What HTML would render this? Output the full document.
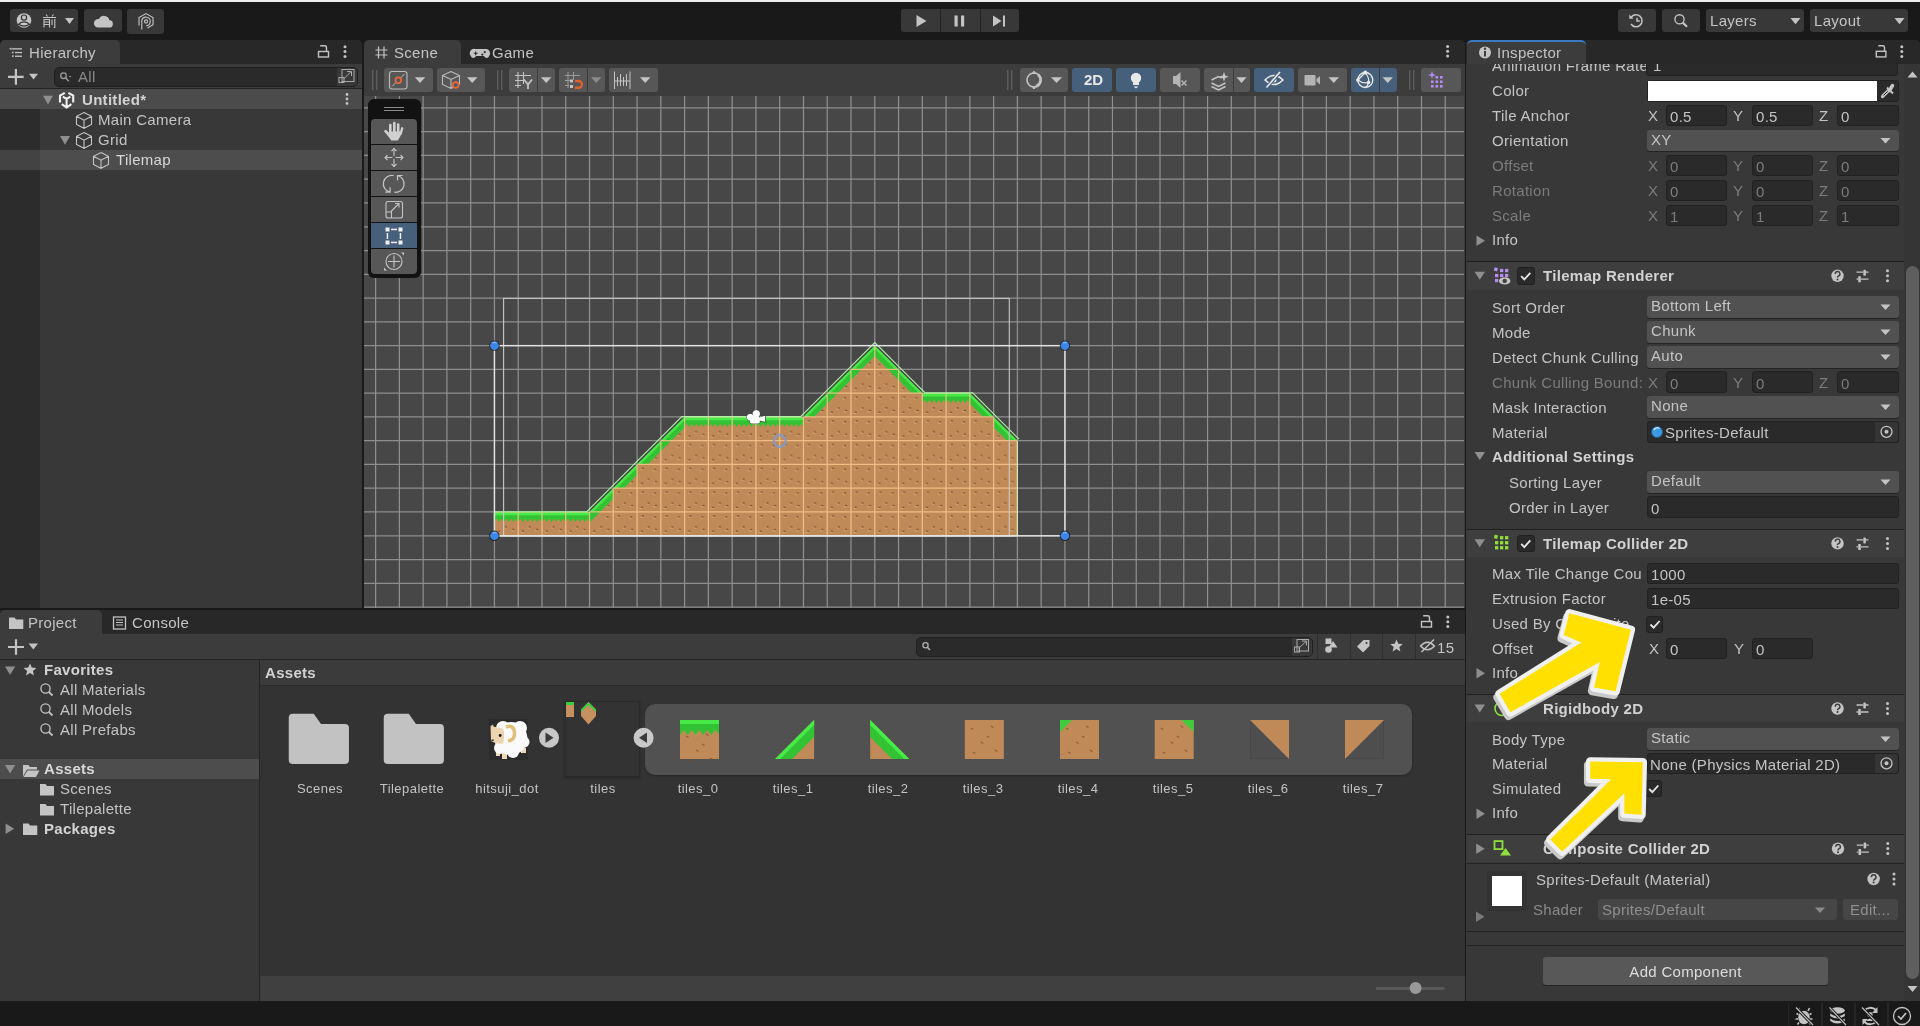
<!DOCTYPE html>
<html><head><meta charset="utf-8"><style>
*{box-sizing:border-box;margin:0;padding:0}
html,body{width:1920px;height:1026px;overflow:hidden}
body{background:#191919;position:relative;font-family:"Liberation Sans",sans-serif;font-size:15px;color:#c4c4c4;letter-spacing:0.3px}
.a{position:absolute}
.t{position:absolute;white-space:nowrap;line-height:20px;height:20px;will-change:transform}
.b{font-weight:bold}
.btn{position:absolute;background:#383838;border-radius:3px}
.tri{position:absolute;width:0;height:0;border-left:5px solid transparent;border-right:5px solid transparent;border-top:6px solid #c4c4c4}
svg{position:absolute;overflow:visible}

</style></head><body>
<div class="a" style="left:0;top:0;width:1920px;height:2px;background:#ededed"></div>
<!-- account -->
<div class="btn" style="left:10px;top:9px;width:68px;height:23px"></div>
<div class="btn" style="left:84px;top:9px;width:38px;height:23px"></div>
<div class="btn" style="left:127px;top:9px;width:37px;height:25px"></div>
<svg style="left:0;top:0" width="1920" height="40">
  <circle cx="24" cy="20.5" r="7.3" fill="#c4c4c4"/>
  <circle cx="24" cy="17.6" r="2.6" fill="#c4c4c4" stroke="#383838" stroke-width="1.2"/>
  <path d="M18.6 24.2 Q24 19.6 29.4 24.2 Q24 28 18.6 24.2Z" fill="#c4c4c4" stroke="#383838" stroke-width="1.2"/>
  <!-- 前 -->
  <g stroke="#c4c4c4" stroke-width="1.1" fill="none">
    <path d="M46 14.5 L47.5 16.5 M53.5 14.5 L52 16.5 M43 17.5 H56"/>
    <path d="M44 27.5 V19.5 H49.5 V27.5 M44 22 H49.5 M44 24.5 H49.5"/>
    <path d="M52 19.5 V25 M54.8 19 V27.5 H53.8"/>
  </g>
  <path d="M65 18 H74 L69.5 24Z" fill="#c4c4c4"/>
  <!-- cloud -->
  <path d="M97.5 27.5 H109 A3.6 3.6 0 0 0 109.5 20.3 A5.6 5.6 0 0 0 99 19 A4.3 4.3 0 0 0 97.5 27.5Z" fill="#c4c4c4"/>
  <!-- hex P -->
  <g fill="none" stroke="#c4c4c4" stroke-width="1.1">
    <path d="M147.5 28 L153 24.8 V17.6 L146 13.6 L139 17.6 V25.6"/>
    <path d="M141.8 29.5 V20.5 A4.3 4.3 0 1 1 146 25.8"/>
    <circle cx="146" cy="21.5" r="1.6"/>
  </g>
</svg>
<!-- play group -->
<div class="btn" style="left:901px;top:9px;width:118px;height:23px"></div>
<div class="a" style="left:940px;top:9px;width:1px;height:23px;background:#232323"></div>
<div class="a" style="left:980px;top:9px;width:1px;height:23px;background:#232323"></div>
<!-- right -->
<div class="btn" style="left:1618px;top:9px;width:38px;height:23px"></div>
<div class="btn" style="left:1662px;top:9px;width:38px;height:23px"></div>
<div class="btn" style="left:1706px;top:9px;width:98px;height:23px"></div>
<div class="btn" style="left:1810px;top:9px;width:98px;height:23px"></div>
<div class="t" style="left:1710px;top:11px">Layers</div>
<div class="t" style="left:1814px;top:11px">Layout</div>
<svg style="left:0;top:0" width="1920" height="40">
  <path d="M916.5 15 V27 L926.5 21Z" fill="#c4c4c4"/>
  <rect x="954.5" y="15.5" width="3.2" height="11" fill="#c4c4c4"/>
  <rect x="961" y="15.5" width="3.2" height="11" fill="#c4c4c4"/>
  <path d="M993 15.5 V26.5 L1001.5 21Z" fill="#c4c4c4"/><rect x="1003" y="15.5" width="2" height="11" fill="#c4c4c4"/>
  <!-- history -->
  <g fill="none" stroke="#c4c4c4" stroke-width="1.5">
    <path d="M1631.2 17.2 A6 6 0 1 1 1631 24"/>
    <path d="M1637 17.8 V21 H1639.8"/>
  </g>
  <path d="M1629.3 14.5 V18.8 H1633.6Z" fill="#c4c4c4"/>
  <!-- search -->
  <circle cx="1679.5" cy="19.3" r="4.6" fill="none" stroke="#c4c4c4" stroke-width="1.4"/>
  <path d="M1682.8 22.6 L1687 26.8" stroke="#c4c4c4" stroke-width="2.2"/>
  <path d="M1790.5 18 H1800.5 L1795.5 24.2Z" fill="#c4c4c4"/>
  <path d="M1894.5 18 H1904.5 L1899.5 24.2Z" fill="#c4c4c4"/>
</svg>

<!-- Hierarchy panel -->
<div class="a" style="left:0;top:40px;width:362px;height:568px;background:#383838;border-radius:5px 5px 0 0;overflow:hidden">
  <div class="a" style="left:0;top:0;width:362px;height:24px;background:#282828"></div>
  <div class="a" style="left:0;top:0;width:120px;height:24px;background:#3c3c3c;border-radius:5px 5px 0 0"></div>
  <div class="a" style="left:0;top:24px;width:362px;height:25px;background:#3c3c3c"></div>
  <div class="a" style="left:0;top:48px;width:362px;height:1px;background:#232323"></div>
  <div class="a" style="left:54px;top:27px;width:304px;height:20px;background:#2a2a2a;border:1px solid #1f1f1f;border-radius:5px"></div>
  <div class="a" style="left:337px;top:28px;width:20px;height:18px;background:#383838;border-radius:0 4px 4px 0"></div>
  <div class="a" style="left:0;top:49px;width:40px;height:519px;background:#2c2c2c"></div>
  <div class="a" style="left:0;top:49px;width:362px;height:20px;background:#4b4b4b"></div>
  <div class="a" style="left:0;top:110px;width:40px;height:20px;background:#434343"></div>
  <div class="a" style="left:40px;top:110px;width:322px;height:20px;background:#4d4d4d"></div>
</div>
<div class="t" style="left:28.5px;top:43px">Hierarchy</div>
<div class="t" style="left:77.5px;top:66.5px;color:#8a8a8a">All</div>
<div class="t b" style="left:81.5px;top:89.8px;color:#d2d2d2">Untitled*</div>
<div class="t" style="left:97.5px;top:110px">Main Camera</div>
<div class="t" style="left:97.5px;top:130px">Grid</div>
<div class="t" style="left:115.8px;top:150px;color:#d8d8d8">Tilemap</div>
<svg style="left:0;top:40px" width="362" height="140">
  <!-- list icon -->
  <g fill="#c4c4c4">
    <path d="M9 8.8 L11.5 7.5 V10.1Z"/>
    <rect x="12" y="8.2" width="10" height="1.3"/>
    <rect x="12" y="11.7" width="1.6" height="1.6"/><rect x="15" y="11.9" width="7" height="1.3"/>
    <rect x="12" y="15.3" width="1.6" height="1.6"/><rect x="15" y="15.6" width="7" height="1.3"/>
  </g>
  <!-- lock -->
  <g fill="none" stroke="#c4c4c4" stroke-width="1.4">
    <rect x="318.5" y="11.5" width="10" height="5.5"/>
    <path d="M326.5 11.5V7.5Q326.5 5.8 324.7 5.8H320.2"/>
  </g>
  <g fill="#c4c4c4"><circle cx="345" cy="6.8" r="1.5"/><circle cx="345" cy="11.6" r="1.5"/><circle cx="345" cy="16.4" r="1.5"/></g>
  <!-- plus -->
  <path d="M8 36.9 H23.7 M15.9 29 V44.7" stroke="#c4c4c4" stroke-width="2.2"/>
  <path d="M29 33.7 H38 L33.5 39.4Z" fill="#c4c4c4"/>
  <!-- search icon -->
  <circle cx="63.5" cy="35.7" r="2.8" fill="none" stroke="#9a9a9a" stroke-width="1.3"/>
  <path d="M65.5 37.8 L68.8 41.2" stroke="#9a9a9a" stroke-width="1.5"/>
  <path d="M68.7 36 H71.3 L70 37.6Z" fill="#9a9a9a"/>
  <!-- expand icon -->
  <g fill="none" stroke="#aaaaaa" stroke-width="1">
    <rect x="342" y="29.5" width="12" height="12"/>
    <rect x="339" y="37.5" width="5" height="5"/>
    <path d="M343.5 39 L351 31.8 M347 31.5 H351.5 V36"/>
  </g>
  <!-- untitled row -->
  <path d="M43 55.8 H53 L48 64.4Z" fill="#8f8f8f"/>
  <g fill="none" stroke="#f0f0f0" stroke-width="2.1"><path d="M60 62.5V55.5L64.8 52.8M68.4 52.8L73.2 55.5V62.5M61.8 64.2L66.6 67.5L71.4 64.2M62.8 56.6L66.6 58.9L70.4 56.6M66.6 58.9V67.5"/></g>
  <g fill="#c4c4c4"><circle cx="347" cy="54.5" r="1.4"/><circle cx="347" cy="59" r="1.4"/><circle cx="347" cy="63.5" r="1.4"/></g>
  <!-- cubes -->
  <g fill="none" stroke="#c4c4c4" stroke-width="1.1">
    <path id="cube" d="M84 72.5 L91.5 76.3 V84.5 L84 88.3 L76.5 84.5 V76.3Z M76.5 76.3 L84 80.2 L91.5 76.3 M84 80.2 V88.3"/>
    <path d="M84 92.5 L91.5 96.3 V104.5 L84 108.3 L76.5 104.5 V96.3Z M76.5 96.3 L84 100.2 L91.5 96.3 M84 100.2 V108.3"/>
    <path d="M101 112.5 L108.5 116.3 V124.5 L101 128.3 L93.5 124.5 V116.3Z M93.5 116.3 L101 120.2 L108.5 116.3 M101 120.2 V128.3"/>
  </g>
  <path d="M60 96 H70 L65 104.8Z" fill="#8f8f8f"/>
</svg>

<!-- Scene panel -->
<div class="a" style="left:364px;top:40px;width:1101px;height:568px;background:#3c3c3c;border-radius:5px 5px 0 0;overflow:hidden">
  <div class="a" style="left:0;top:0;width:1101px;height:24px;background:#282828"></div>
  <div class="a" style="left:0;top:0;width:97px;height:24px;background:#3c3c3c;border-radius:5px 5px 0 0"></div>
</div>
<svg style="left:0;top:0" width="1920" height="1026" viewBox="0 0 1920 1026">
<defs><clipPath id="sc"><rect x="364" y="96" width="1100" height="512"/></clipPath>
<pattern id="dirt" patternUnits="userSpaceOnUse" x="494.45" y="535.80" width="23.77" height="23.77">
<rect width="24" height="24" fill="#c08a58"/>
<ellipse cx="5.0" cy="4.8999999999999995" rx="1.5" ry="0.85" fill="#dcb486" opacity="0.75"/>
<ellipse cx="5.7" cy="3.9999999999999996" rx="1.4" ry="0.75" fill="#6a4020" opacity="0.8"/>
<ellipse cx="17.1" cy="5.8999999999999995" rx="1.5" ry="0.85" fill="#dcb486" opacity="0.75"/>
<ellipse cx="17.8" cy="5.0" rx="1.4" ry="0.75" fill="#6a4020" opacity="0.8"/>
<ellipse cx="10.799999999999999" cy="15.700000000000001" rx="1.5" ry="0.85" fill="#dcb486" opacity="0.75"/>
<ellipse cx="11.5" cy="14.8" rx="1.4" ry="0.75" fill="#6a4020" opacity="0.8"/>
<ellipse cx="4.0" cy="20.0" rx="1.5" ry="0.85" fill="#dcb486" opacity="0.75"/>
<ellipse cx="4.7" cy="19.099999999999998" rx="1.4" ry="0.75" fill="#6a4020" opacity="0.8"/>
<ellipse cx="18.1" cy="18.3" rx="1.5" ry="0.85" fill="#dcb486" opacity="0.75"/>
<ellipse cx="18.8" cy="17.4" rx="1.4" ry="0.75" fill="#6a4020" opacity="0.8"/>
</pattern></defs>
<g clip-path="url(#sc)">
<rect x="364" y="96" width="1100" height="512" fill="#474747"/>
<path d="M375.60 96V608M399.37 96V608M423.14 96V608M446.91 96V608M470.68 96V608M494.45 96V608M518.22 96V608M541.99 96V608M565.76 96V608M589.53 96V608M613.30 96V608M637.07 96V608M660.84 96V608M684.61 96V608M708.38 96V608M732.15 96V608M755.92 96V608M779.69 96V608M803.46 96V608M827.23 96V608M851.00 96V608M874.77 96V608M898.54 96V608M922.31 96V608M946.08 96V608M969.85 96V608M993.62 96V608M1017.39 96V608M1041.16 96V608M1064.93 96V608M1088.70 96V608M1112.47 96V608M1136.24 96V608M1160.01 96V608M1183.78 96V608M1207.55 96V608M1231.32 96V608M1255.09 96V608M1278.86 96V608M1302.63 96V608M1326.40 96V608M1350.17 96V608M1373.94 96V608M1397.71 96V608M1421.48 96V608M1445.25 96V608M364 107.90H1464M364 131.67H1464M364 155.44H1464M364 179.21H1464M364 202.98H1464M364 226.75H1464M364 250.52H1464M364 274.29H1464M364 298.06H1464M364 321.83H1464M364 345.60H1464M364 369.37H1464M364 393.14H1464M364 416.91H1464M364 440.68H1464M364 464.45H1464M364 488.22H1464M364 511.99H1464M364 535.76H1464M364 559.53H1464M364 583.30H1464M364 607.07H1464" stroke="#8e8e8e" stroke-width="1.25" fill="none"/>
<path d="M494.45 535.80H518.22V512.03H494.45ZM518.22 535.80H541.99V512.03H518.22ZM541.99 535.80H565.76V512.03H541.99ZM565.76 535.80H589.53V512.03H565.76ZM589.53 535.80H613.30V512.03H589.53ZM589.53 512.03L613.30 488.26V512.03ZM613.30 535.80H637.07V488.26H613.30ZM613.30 488.26L637.07 464.49V488.26ZM637.07 535.80H660.84V464.49H637.07ZM637.07 464.49L660.84 440.72V464.49ZM660.84 535.80H684.61V440.72H660.84ZM660.84 440.72L684.61 416.95V440.72ZM684.61 535.80H708.38V416.95H684.61ZM708.38 535.80H732.15V416.95H708.38ZM732.15 535.80H755.92V416.95H732.15ZM755.92 535.80H779.69V416.95H755.92ZM779.69 535.80H803.46V416.95H779.69ZM803.46 535.80H827.23V416.95H803.46ZM803.46 416.95L827.23 393.18V416.95ZM827.23 535.80H851.00V393.18H827.23ZM827.23 393.18L851.00 369.41V393.18ZM851.00 535.80H874.77V369.41H851.00ZM851.00 369.41L874.77 345.64V369.41ZM874.77 535.80H898.54V369.41H874.77ZM874.77 345.64L898.54 369.41H874.77ZM898.54 535.80H922.31V393.18H898.54ZM898.54 369.41L922.31 393.18H898.54ZM922.31 535.80H946.08V393.18H922.31ZM946.08 535.80H969.85V393.18H946.08ZM969.85 535.80H993.62V416.95H969.85ZM969.85 393.18L993.62 416.95H969.85ZM993.62 535.80H1017.39V440.72H993.62ZM993.62 416.95L1017.39 440.72H993.62Z" fill="url(#dirt)"/>
<path d="M494.45 512.03H518.22V522.03L515.84 518.83L513.47 522.03L511.09 518.83L508.71 522.03L506.34 518.83L503.96 522.03L501.58 518.83L499.20 522.03L496.83 518.83L494.45 522.03ZM518.22 512.03H541.99V522.03L539.61 518.83L537.24 522.03L534.86 518.83L532.48 522.03L530.11 518.83L527.73 522.03L525.35 518.83L522.97 522.03L520.60 518.83L518.22 522.03ZM541.99 512.03H565.76V522.03L563.38 518.83L561.01 522.03L558.63 518.83L556.25 522.03L553.88 518.83L551.50 522.03L549.12 518.83L546.74 522.03L544.37 518.83L541.99 522.03ZM565.76 512.03H589.53V522.03L587.15 518.83L584.78 522.03L582.40 518.83L580.02 522.03L577.64 518.83L575.27 522.03L572.89 518.83L570.51 522.03L568.14 518.83L565.76 522.03ZM589.53 512.03L613.30 488.26V498.76L600.03 512.03ZM613.30 488.26L637.07 464.49V474.99L623.80 488.26ZM637.07 464.49L660.84 440.72V451.22L647.57 464.49ZM660.84 440.72L684.61 416.95V427.45L671.34 440.72ZM684.61 416.95H708.38V426.95L706.00 423.75L703.63 426.95L701.25 423.75L698.87 426.95L696.50 423.75L694.12 426.95L691.74 423.75L689.36 426.95L686.99 423.75L684.61 426.95ZM708.38 416.95H732.15V426.95L729.77 423.75L727.40 426.95L725.02 423.75L722.64 426.95L720.26 423.75L717.89 426.95L715.51 423.75L713.13 426.95L710.76 423.75L708.38 426.95ZM732.15 416.95H755.92V426.95L753.54 423.75L751.17 426.95L748.79 423.75L746.41 426.95L744.03 423.75L741.66 426.95L739.28 423.75L736.90 426.95L734.53 423.75L732.15 426.95ZM755.92 416.95H779.69V426.95L777.31 423.75L774.94 426.95L772.56 423.75L770.18 426.95L767.80 423.75L765.43 426.95L763.05 423.75L760.67 426.95L758.30 423.75L755.92 426.95ZM779.69 416.95H803.46V426.95L801.08 423.75L798.71 426.95L796.33 423.75L793.95 426.95L791.58 423.75L789.20 426.95L786.82 423.75L784.44 426.95L782.07 423.75L779.69 426.95ZM803.46 416.95L827.23 393.18V403.68L813.96 416.95ZM827.23 393.18L851.00 369.41V379.91L837.73 393.18ZM851.00 369.41L874.77 345.64V356.14L861.50 369.41ZM874.77 345.64L898.54 369.41H888.04L874.77 356.14ZM898.54 369.41L922.31 393.18H911.81L898.54 379.91ZM922.31 393.18H946.08V403.18L943.70 399.98L941.33 403.18L938.95 399.98L936.57 403.18L934.19 399.98L931.82 403.18L929.44 399.98L927.06 403.18L924.69 399.98L922.31 403.18ZM946.08 393.18H969.85V403.18L967.47 399.98L965.10 403.18L962.72 399.98L960.34 403.18L957.96 399.98L955.59 403.18L953.21 399.98L950.83 403.18L948.46 399.98L946.08 403.18ZM969.85 393.18L993.62 416.95H983.12L969.85 403.68ZM993.62 416.95L1017.39 440.72H1006.89L993.62 427.45ZM589.53 512.03H600.03L589.53 522.53ZM660.84 440.72H671.34L660.84 451.22ZM827.23 393.18H837.73L827.23 403.68ZM851.00 369.41H861.50L851.00 379.91ZM898.54 369.41H888.04L898.54 379.91Z" fill="#33c233"/>
<path d="M494.45 512.03H518.22V515.23H494.45ZM518.22 512.03H541.99V515.23H518.22ZM541.99 512.03H565.76V515.23H541.99ZM565.76 512.03H589.53V515.23H565.76ZM589.53 512.03L613.30 488.26V491.46L592.73 512.03ZM613.30 488.26L637.07 464.49V467.69L616.50 488.26ZM637.07 464.49L660.84 440.72V443.92L640.27 464.49ZM660.84 440.72L684.61 416.95V420.15L664.04 440.72ZM684.61 416.95H708.38V420.15H684.61ZM708.38 416.95H732.15V420.15H708.38ZM732.15 416.95H755.92V420.15H732.15ZM755.92 416.95H779.69V420.15H755.92ZM779.69 416.95H803.46V420.15H779.69ZM803.46 416.95L827.23 393.18V396.38L806.66 416.95ZM827.23 393.18L851.00 369.41V372.61L830.43 393.18ZM851.00 369.41L874.77 345.64V348.84L854.20 369.41ZM874.77 345.64L898.54 369.41H895.34L874.77 348.84ZM898.54 369.41L922.31 393.18H919.11L898.54 372.61ZM922.31 393.18H946.08V396.38H922.31ZM946.08 393.18H969.85V396.38H946.08ZM969.85 393.18L993.62 416.95H990.42L969.85 396.38ZM993.62 416.95L1017.39 440.72H1014.19L993.62 420.15Z" fill="#47ea47"/>
<clipPath id="tm"><polygon points="494.45,535.80 494.45,512.03 518.22,512.03 541.99,512.03 565.76,512.03 589.53,512.03 613.30,488.26 637.07,464.49 660.84,440.72 684.61,416.95 708.38,416.95 732.15,416.95 755.92,416.95 779.69,416.95 803.46,416.95 827.23,393.18 851.00,369.41 874.77,345.64 898.54,369.41 922.31,393.18 946.08,393.18 969.85,393.18 993.62,416.95 1017.39,440.72 1017.39,535.80"/></clipPath>
<g clip-path="url(#tm)"><path d="M375.60 96V608M399.37 96V608M423.14 96V608M446.91 96V608M470.68 96V608M494.45 96V608M518.22 96V608M541.99 96V608M565.76 96V608M589.53 96V608M613.30 96V608M637.07 96V608M660.84 96V608M684.61 96V608M708.38 96V608M732.15 96V608M755.92 96V608M779.69 96V608M803.46 96V608M827.23 96V608M851.00 96V608M874.77 96V608M898.54 96V608M922.31 96V608M946.08 96V608M969.85 96V608M993.62 96V608M1017.39 96V608M1041.16 96V608M1064.93 96V608M1088.70 96V608M1112.47 96V608M1136.24 96V608M1160.01 96V608M1183.78 96V608M1207.55 96V608M1231.32 96V608M1255.09 96V608M1278.86 96V608M1302.63 96V608M1326.40 96V608M1350.17 96V608M1373.94 96V608M1397.71 96V608M1421.48 96V608M1445.25 96V608M364 107.90H1464M364 131.67H1464M364 155.44H1464M364 179.21H1464M364 202.98H1464M364 226.75H1464M364 250.52H1464M364 274.29H1464M364 298.06H1464M364 321.83H1464M364 345.60H1464M364 369.37H1464M364 393.14H1464M364 416.91H1464M364 440.68H1464M364 464.45H1464M364 488.22H1464M364 511.99H1464M364 535.76H1464M364 559.53H1464M364 583.30H1464M364 607.07H1464" stroke="#f3c38c" stroke-width="1.25" fill="none" opacity="0.9"/></g>
<polyline points="494.45,511.73 518.22,511.73 541.99,511.73 565.76,511.73 586.72,511.73 611.74,486.70 635.51,462.93 659.28,439.16 681.80,416.65 708.38,416.65 732.15,416.65 755.92,416.65 779.69,416.65 800.65,416.65 825.67,391.62 849.44,367.85 874.77,342.53 900.10,367.85 925.12,392.88 946.08,392.88 972.66,392.88 995.18,415.39 1018.95,439.16" fill="none" stroke="#aef2a6" stroke-width="1.1"/>
<polyline points="494.45,512.03 494.45,535.80" stroke="#c8f8c0" stroke-width="1"/>
<polyline points="1017.39,440.72 1017.39,535.80" stroke="#c8f8c0" stroke-width="1"/>
<polyline points="494.45,535.80 1017.39,535.80" stroke="#d8ffd0" stroke-width="1.5"/>
<rect x="503.6" y="298.4" width="505.7" height="237.6" fill="none" stroke="#c8c8c8" stroke-width="1.1"/>
<rect x="494.45" y="345.64" width="570.48" height="190.16" fill="none" stroke="#e4e4e4" stroke-width="1.4"/>
<circle cx="494.45" cy="345.64" r="5.2" fill="#141414" opacity="0.8"/>
<circle cx="494.45" cy="345.64" r="4.3" fill="#3d86e8"/>
<path d="M492.45 342.64h4" stroke="#8ec0ff" stroke-width="1"/>
<circle cx="1064.93" cy="345.64" r="5.2" fill="#141414" opacity="0.8"/>
<circle cx="1064.93" cy="345.64" r="4.3" fill="#3d86e8"/>
<path d="M1062.93 342.64h4" stroke="#8ec0ff" stroke-width="1"/>
<circle cx="494.45" cy="535.80" r="5.2" fill="#141414" opacity="0.8"/>
<circle cx="494.45" cy="535.80" r="4.3" fill="#3d86e8"/>
<path d="M492.45 532.80h4" stroke="#8ec0ff" stroke-width="1"/>
<circle cx="1064.93" cy="535.80" r="5.2" fill="#141414" opacity="0.8"/>
<circle cx="1064.93" cy="535.80" r="4.3" fill="#3d86e8"/>
<path d="M1062.93 532.80h4" stroke="#8ec0ff" stroke-width="1"/>
<circle cx="779.8" cy="441" r="5.9" fill="none" stroke="#7f9ac8" stroke-width="2.6" opacity="0.8"/>
<g fill="#ffffff" stroke="#1a1a1a" stroke-width="0.6"><circle cx="756.3" cy="413.8" r="3.8"/><circle cx="750.3" cy="417.3" r="3.6"/><rect x="749.5" y="416" width="10.5" height="7.5" rx="2"/><path d="M759 417.5 L765.5 415.2 V422.2 L759 420.5Z"/></g>
<g fill="#ffffff"><circle cx="756.3" cy="413.8" r="3.5"/><circle cx="750.3" cy="417.3" r="3.3"/><rect x="750" y="416.4" width="9.8" height="7" rx="2"/><path d="M759.3 417.9 L765 415.9 V421.6 L759.3 420.2Z"/></g>
</g></svg>

<div class="t" style="left:394.3px;top:43px">Scene</div>
<div class="t" style="left:492.3px;top:43px">Game</div>
<!-- scene toolbar buttons -->
<div class="a" style="left:384px;top:68px;width:49px;height:24px;background:#575757;border-radius:3px"></div>
<div class="a" style="left:437px;top:68px;width:48px;height:24px;background:#575757;border-radius:3px"></div>
<div class="a" style="left:509px;top:68px;width:46px;height:24px;background:#575757;border-radius:3px"></div>
<div class="a" style="left:537px;top:68px;width:1px;height:24px;background:#3c3c3c"></div>
<div class="a" style="left:559px;top:68px;width:46px;height:24px;background:#575757;border-radius:3px"></div>
<div class="a" style="left:587px;top:68px;width:1px;height:24px;background:#3c3c3c"></div>
<div class="a" style="left:609px;top:68px;width:49px;height:24px;background:#575757;border-radius:3px"></div>
<div class="a" style="left:1020px;top:68px;width:48px;height:24px;background:#575757;border-radius:3px"></div>
<div class="a" style="left:1072px;top:68px;width:40px;height:24px;background:#46607c;border-radius:3px"></div>
<div class="a" style="left:1116px;top:68px;width:40px;height:24px;background:#46607c;border-radius:3px"></div>
<div class="a" style="left:1160px;top:68px;width:40px;height:24px;background:#575757;border-radius:3px"></div>
<div class="a" style="left:1204px;top:68px;width:46px;height:24px;background:#575757;border-radius:3px"></div>
<div class="a" style="left:1233px;top:68px;width:1px;height:24px;background:#3c3c3c"></div>
<div class="a" style="left:1254px;top:68px;width:40px;height:24px;background:#46607c;border-radius:3px"></div>
<div class="a" style="left:1298px;top:68px;width:49px;height:24px;background:#575757;border-radius:3px"></div>
<div class="a" style="left:1351px;top:68px;width:46px;height:24px;background:#46607c;border-radius:3px"></div>
<div class="a" style="left:1379px;top:68px;width:1px;height:24px;background:#3c3c3c"></div>
<div class="a" style="left:1421px;top:68px;width:40px;height:24px;background:#575757;border-radius:3px"></div>
<div class="t b" style="left:1084px;top:70px;color:#e8e8e8;font-size:15px;letter-spacing:0">2D</div>
<svg style="left:0;top:0" width="1920" height="100">
  <!-- scene tab icon # -->
  <path d="M378.5 46.5V58.5M384 46.5V58.5M375.5 50H387.5M375.5 55H387.5" stroke="#c4c4c4" stroke-width="1.2"/>
  <!-- game icon -->
  <path d="M475 49H485.5A4.3 4.3 0 0 1 489 56.2Q488.3 58.6 485.8 57.8L483.6 56H476.4L474.2 57.8Q471.7 58.6 471 56.2A4.3 4.3 0 0 1 475 49Z" fill="#c4c4c4"/>
  <path d="M473.8 53.3H477.6M475.7 51.4V55.2" stroke="#282828" stroke-width="1.1"/>
  <circle cx="482.3" cy="54.6" r="1.1" fill="#282828"/><circle cx="484.8" cy="52.1" r="1.1" fill="#282828"/>
  <!-- kebab -->
  <g fill="#c4c4c4"><circle cx="1447.6" cy="46.5" r="1.5"/><circle cx="1447.6" cy="51.3" r="1.5"/><circle cx="1447.6" cy="56.1" r="1.5"/></g>
  <!-- grips -->
  <path d="M372.8 70V90M376.8 70V90M497.8 70V90M501.8 70V90M1007.8 70V90M1011.8 70V90M1409.8 70V90M1413.8 70V90" stroke="#6a6a6a" stroke-width="1"/>
  <!-- B1 -->
  <rect x="389.5" y="71.5" width="17.5" height="17.5" rx="2.5" fill="none" stroke="#bdbdbd" stroke-width="1.1"/>
  <path d="M392 86.5L396 82.5M400.5 78L404.5 74" stroke="#bdbdbd" stroke-width="1"/>
  <circle cx="398.3" cy="80.3" r="2.9" fill="none" stroke="#f0683a" stroke-width="1.6"/>
  <g fill="#c4c4c4">
    <path d="M414.8 77.2H425.3L420 83.1Z"/>
    <path d="M467 77.2H477.5L472.2 83.1Z"/>
    <path d="M541 77.2H551.5L546.2 83.1Z"/>
    <path d="M640 77.2H650.5L645.2 83.1Z"/>
    <path d="M1051 77.2H1062L1056.5 83.1Z"/>
    <path d="M1236.5 77.2H1246.5L1241.5 83.1Z"/>
    <path d="M1328.5 77.2H1339L1333.7 83.1Z"/>
    <path d="M1382.5 77.2H1393L1387.7 83.1Z"/>
  </g>
  <path d="M591 77.2H601.5L596.2 83.1Z" fill="#8a8a8a"/>
  <!-- B2 cube -->
  <g fill="none" stroke="#bdbdbd" stroke-width="1.1">
    <path d="M451 71.5L459.5 75.5V84.5M451 71.5L442.5 75.5V84.5L451 88.5L453 87.5M442.5 75.5L451 79.5L459.5 75.5M451 79.5V88.5"/>
  </g>
  <circle cx="455.7" cy="85" r="2.9" fill="#575757" stroke="#f0683a" stroke-width="1.6"/>
  <!-- B3 grid Y -->
  <g stroke="#c4c4c4" stroke-width="1.1" fill="none">
    <path d="M518 72V88M523.5 72V84M515 75.5H531M515 80.5H525M515 85.5H521"/>
  </g>
  <path d="M524 79.5L528 84.5L532 79.5M528 84.5V89" stroke="#c4c4c4" stroke-width="1.8" fill="none"/>
  <!-- B4 grid magnet -->
  <g stroke="#9a9a9a" stroke-width="1" fill="none">
    <path d="M568 72V88M573.5 72V80M565 75.5H580M565 80.5H572M565 85.5H569"/>
  </g>
  <rect x="570" y="79.5" width="3" height="3" fill="#c4c4c4"/><rect x="570" y="85" width="3" height="3" fill="#c4c4c4"/>
  <path d="M575 81H578.5A3.4 3.4 0 0 1 578.5 87.8H575" stroke="#e0602e" stroke-width="2.4" fill="none"/>
  <!-- B5 ruler -->
  <path d="M614.5 71.5V89M630 71.5V89M617.5 77V86M620.5 74V86M623.5 77V86M626.5 74V86M614.5 81H630" stroke="#c4c4c4" stroke-width="1" fill="none"/>
  <!-- shading circle -->
  <circle cx="1034" cy="80" r="7" fill="none" stroke="#c4c4c4" stroke-width="1.6"/>
  <path d="M1038 74.5A7 7 0 0 1 1036 86.5" stroke="#c4c4c4" stroke-width="2.6" fill="none"/>
  <circle cx="1034" cy="72.5" r="1.5" fill="#c4c4c4"/><circle cx="1034" cy="87.5" r="1.5" fill="#c4c4c4"/>
  <!-- light bulb -->
  <circle cx="1136" cy="78" r="5.2" fill="#e8e8e8"/>
  <path d="M1133 82H1139V85H1133Z" fill="#e8e8e8"/>
  <path d="M1133.5 86.5H1138.5L1136 88.5Z" fill="#e8e8e8"/>
  <!-- audio mute -->
  <path d="M1173 76H1176L1180.5 72V88L1176 84H1173Z" fill="#b4b4b4"/>
  <path d="M1181.5 80.5L1186.5 85.5M1186.5 80.5L1181.5 85.5" stroke="#b4b4b4" stroke-width="1.5"/>
  <!-- effects -->
  <path d="M1211.5 83L1218.5 86.5L1225.5 83M1211.5 86.5L1218.5 90L1225.5 86.5" stroke="#c4c4c4" stroke-width="1.5" fill="none"/>
  <path d="M1211.5 80L1218.5 76.5L1222 78.2" stroke="#c4c4c4" stroke-width="1.5" fill="none"/>
  <path d="M1224 72L1225.3 75.5L1228.8 76.8L1225.3 78.1L1224 81.6L1222.7 78.1L1219.2 76.8L1222.7 75.5Z" fill="#c4c4c4"/>
  <!-- hidden eye -->
  <path d="M1265 80Q1274 71 1283 80Q1274 89 1265 80Z" fill="none" stroke="#e8e8e8" stroke-width="1.6"/>
  <circle cx="1274" cy="80" r="2.5" fill="#e8e8e8"/>
  <path d="M1266.5 87.5L1280 72" stroke="#46607c" stroke-width="3.5"/>
  <path d="M1266.5 87.5L1280 72" stroke="#e8e8e8" stroke-width="1.6"/>
  <!-- camera -->
  <rect x="1304.5" y="75" width="11" height="10.5" rx="1" fill="#b4b4b4"/>
  <path d="M1316.5 79L1320 76V84.5L1316.5 81.5Z" fill="#b4b4b4"/>
  <!-- gizmos globe -->
  <circle cx="1365.3" cy="80" r="7.5" fill="none" stroke="#e8e8e8" stroke-width="1.4"/>
  <path d="M1357.8 80Q1362 76 1365.3 72.5Q1370 79 1368.5 82.5Q1363 84 1357.8 80M1368.5 82.5Q1368 86 1365.3 87.5" fill="none" stroke="#e8e8e8" stroke-width="1.2"/>
  <circle cx="1365.3" cy="72.5" r="2" fill="#e8e8e8"/><circle cx="1357.8" cy="80" r="1.8" fill="#e8e8e8"/><circle cx="1368.5" cy="82.5" r="1.8" fill="#e8e8e8"/>
  <!-- tile palette -->
  <g fill="#b48ef0">
    <rect x="1435.5" y="76" width="2.6" height="2.6"/><rect x="1440" y="76" width="2.6" height="2.6"/>
    <rect x="1431" y="80.5" width="2.6" height="2.6"/><rect x="1435.5" y="80.5" width="2.6" height="2.6"/><rect x="1440" y="80.5" width="2.6" height="2.6"/>
    <rect x="1431" y="85" width="2.6" height="2.6"/><rect x="1435.5" y="85" width="2.6" height="2.6"/><rect x="1440" y="85" width="2.6" height="2.6"/>
    <path d="M1432 71L1433 74L1436 75L1433 76L1432 79L1431 76L1428 75L1431 74Z"/>
  </g>
</svg>
<!-- tool overlay -->
<div class="a" style="left:367.5px;top:99px;width:53.5px;height:178.5px;background:#121212;border-radius:6px"></div>
<div class="a" style="left:371px;top:119px;width:46px;height:24.5px;background:#575757;border-radius:4px 4px 0 0"></div>
<div class="a" style="left:371px;top:145px;width:46px;height:25px;background:#575757"></div>
<div class="a" style="left:371px;top:171px;width:46px;height:25px;background:#575757"></div>
<div class="a" style="left:371px;top:197px;width:46px;height:25px;background:#575757"></div>
<div class="a" style="left:371px;top:223px;width:46px;height:25px;background:#46607c"></div>
<div class="a" style="left:371px;top:249px;width:46px;height:25px;background:#575757;border-radius:0 0 4px 4px"></div>
<svg style="left:0;top:0" width="1920" height="300">
  <path d="M384 107.5H404M384 110.5H404" stroke="#8a8a8a" stroke-width="1"/>
  <!-- hand -->
  <g stroke="#d0d0d0" stroke-linecap="round" fill="none">
    <path d="M390.3 125V133M394.3 123V133M398.2 124.5V133" stroke-width="2.6"/>
    <path d="M402.2 128.3L400.6 134" stroke-width="2.4"/>
    <path d="M385.5 131.2L389.5 135.5" stroke-width="2.6"/>
  </g>
  <path d="M389 131.5H401.5L400.5 136L397.8 140.5H391.2L387.8 135.5Z" fill="#d0d0d0"/>
  <!-- move -->
  <g stroke="#c4c4c4" stroke-width="1.1" fill="none">
    <path d="M394 148.5V166.5M385 157.5H403"/>
    <path d="M391.5 151L394 148.5L396.5 151M391.5 164L394 166.5L396.5 164M387.5 155L385 157.5L387.5 160M400.5 155L403 157.5L400.5 160"/>
  </g>
  <rect x="392.5" y="156" width="3" height="3" fill="#575757"/>
  <!-- rotate -->
  <g stroke="#c4c4c4" stroke-width="1.2" fill="none">
    <path d="M393.6 175.5A8.5 8.5 0 0 0 390.1 192.2M390.1 187.2V192.2H385.2"/>
    <path d="M394.4 192.2A8.5 8.5 0 0 0 397.5 175.5M397.5 180.4V175.5H402.6"/>
  </g>
  <!-- scale -->
  <g stroke="#c4c4c4" stroke-width="1.1" fill="none">
    <rect x="386" y="201.5" width="16.5" height="16.5" rx="2"/>
    <path d="M386 212H391.5V218M391 211.5L399 203.5M395 203.5H399V207.5"/>
  </g>
  <!-- rect tool -->
  <g fill="#f0f0f0">
    <rect x="385.5" y="227.5" width="4" height="4"/><rect x="398.5" y="227.5" width="4" height="4"/>
    <rect x="385.5" y="240.5" width="4" height="4"/><rect x="398.5" y="240.5" width="4" height="4"/>
    <rect x="391" y="228.7" width="6" height="1.5"/><rect x="391" y="241.7" width="6" height="1.5"/>
    <rect x="386.7" y="233" width="1.5" height="6"/><rect x="399.7" y="233" width="1.5" height="6"/>
  </g>
  <!-- transform -->
  <g stroke="#c4c4c4" stroke-width="1.1" fill="none">
    <circle cx="394" cy="261.5" r="8"/>
    <path d="M394 255.5V267.5M388 261.5H400"/>
  </g>
  <path d="M401 252.5H404V255.5ZM387 270.5H384V267.5Z" fill="#c4c4c4"/>
</svg>

<div class="a" style="left:1466px;top:40px;width:454px;height:961px;background:#383838;border-radius:5px 5px 0 0;overflow:hidden">
<div class="a" style="left:0;top:0;width:454px;height:24px;background:#282828"></div>
<div class="a" style="left:1px;top:0;width:119px;height:24px;background:#3c3c3c;border-radius:5px 5px 0 0;border-top:2px solid #3a79c0"></div>
<div class="a" style="left:438px;top:24px;width:16px;height:937px;background:#353535"></div>
</div>
<div class="a" style="left:1466px;top:64px;width:438px;height:14px;overflow:hidden">
<div class="a" style="left:25.5px;top:-8.5px;width:154px;height:20px;overflow:hidden"><div class="t" style="left:0;top:0">Animation Frame Rate</div></div>
<div class="a" style="left:180px;top:-10px;width:252px;height:21.5px;background:#2a2a2a;border:1px solid #212121;border-radius:3px"></div>
<div class="t" style="left:187px;top:-8.5px">1</div>
</div>
<div class="t" style="left:1491.5px;top:81.3px;color:#c4c4c4;">Color</div>
<div class="a" style="left:1646.5px;top:79.5px;width:252px;height:22px;background:#2a2a2a;border:1px solid #212121;border-radius:3px"></div>
<div class="a" style="left:1647.5px;top:80.5px;width:229px;height:20px;background:#ffffff"></div>
<div class="t" style="left:1491.5px;top:106.3px;color:#c4c4c4;">Tile Anchor</div>
<div class="t" style="left:1648px;top:106.3px;color:#c4c4c4;">X</div>
<div class="a" style="left:1665.5px;top:104.5px;width:61.0px;height:21.5px;background:#2a2a2a;border:1px solid #212121;border-radius:3px"></div>
<div class="t" style="left:1669.5px;top:107.3px;color:#c4c4c4;">0.5</div>
<div class="t" style="left:1733px;top:106.3px;color:#c4c4c4;">Y</div>
<div class="a" style="left:1751.5px;top:104.5px;width:61.0px;height:21.5px;background:#2a2a2a;border:1px solid #212121;border-radius:3px"></div>
<div class="t" style="left:1755.5px;top:107.3px;color:#c4c4c4;">0.5</div>
<div class="t" style="left:1819px;top:106.3px;color:#c4c4c4;">Z</div>
<div class="a" style="left:1837px;top:104.5px;width:61.5px;height:21.5px;background:#2a2a2a;border:1px solid #212121;border-radius:3px"></div>
<div class="t" style="left:1841px;top:107.3px;color:#c4c4c4;">0</div>
<div class="t" style="left:1491.5px;top:131.3px;color:#c4c4c4;">Orientation</div>
<div class="a" style="left:1647px;top:129.5px;width:251.5px;height:21.5px;background:#515151;border-radius:3px;box-shadow:0 1px 0 #242424"></div>
<div class="t" style="left:1651px;top:129.5px;color:#c4c4c4;">XY</div>
<div class="t" style="left:1491.5px;top:156.3px;color:#7c7c7c;">Offset</div>
<div class="t" style="left:1648px;top:156.3px;color:#7c7c7c;">X</div>
<div class="a" style="left:1665.5px;top:154.5px;width:61.0px;height:21.5px;background:#2a2a2a;border:1px solid #212121;border-radius:3px"></div>
<div class="t" style="left:1669.5px;top:157.3px;color:#7c7c7c;">0</div>
<div class="t" style="left:1733px;top:156.3px;color:#7c7c7c;">Y</div>
<div class="a" style="left:1751.5px;top:154.5px;width:61.0px;height:21.5px;background:#2a2a2a;border:1px solid #212121;border-radius:3px"></div>
<div class="t" style="left:1755.5px;top:157.3px;color:#7c7c7c;">0</div>
<div class="t" style="left:1819px;top:156.3px;color:#7c7c7c;">Z</div>
<div class="a" style="left:1837px;top:154.5px;width:61.5px;height:21.5px;background:#2a2a2a;border:1px solid #212121;border-radius:3px"></div>
<div class="t" style="left:1841px;top:157.3px;color:#7c7c7c;">0</div>
<div class="t" style="left:1491.5px;top:181.3px;color:#7c7c7c;">Rotation</div>
<div class="t" style="left:1648px;top:181.3px;color:#7c7c7c;">X</div>
<div class="a" style="left:1665.5px;top:179.5px;width:61.0px;height:21.5px;background:#2a2a2a;border:1px solid #212121;border-radius:3px"></div>
<div class="t" style="left:1669.5px;top:182.3px;color:#7c7c7c;">0</div>
<div class="t" style="left:1733px;top:181.3px;color:#7c7c7c;">Y</div>
<div class="a" style="left:1751.5px;top:179.5px;width:61.0px;height:21.5px;background:#2a2a2a;border:1px solid #212121;border-radius:3px"></div>
<div class="t" style="left:1755.5px;top:182.3px;color:#7c7c7c;">0</div>
<div class="t" style="left:1819px;top:181.3px;color:#7c7c7c;">Z</div>
<div class="a" style="left:1837px;top:179.5px;width:61.5px;height:21.5px;background:#2a2a2a;border:1px solid #212121;border-radius:3px"></div>
<div class="t" style="left:1841px;top:182.3px;color:#7c7c7c;">0</div>
<div class="t" style="left:1491.5px;top:206.3px;color:#7c7c7c;">Scale</div>
<div class="t" style="left:1648px;top:206.3px;color:#7c7c7c;">X</div>
<div class="a" style="left:1665.5px;top:204.5px;width:61.0px;height:21.5px;background:#2a2a2a;border:1px solid #212121;border-radius:3px"></div>
<div class="t" style="left:1669.5px;top:207.3px;color:#7c7c7c;">1</div>
<div class="t" style="left:1733px;top:206.3px;color:#7c7c7c;">Y</div>
<div class="a" style="left:1751.5px;top:204.5px;width:61.0px;height:21.5px;background:#2a2a2a;border:1px solid #212121;border-radius:3px"></div>
<div class="t" style="left:1755.5px;top:207.3px;color:#7c7c7c;">1</div>
<div class="t" style="left:1819px;top:206.3px;color:#7c7c7c;">Z</div>
<div class="a" style="left:1837px;top:204.5px;width:61.5px;height:21.5px;background:#2a2a2a;border:1px solid #212121;border-radius:3px"></div>
<div class="t" style="left:1841px;top:207.3px;color:#7c7c7c;">1</div>
<div class="t" style="left:1491.5px;top:230.4px;color:#c4c4c4;">Info</div>
<div class="a" style="left:1467px;top:261px;width:437px;height:1px;background:#1f1f1f"></div>
<div class="a" style="left:1467px;top:262px;width:437px;height:27.5px;background:#3e3e3e"></div>
<div class="a" style="left:1517px;top:267.25px;width:17.5px;height:17.5px;background:#2a2a2a;border:1px solid #202020;border-radius:3px"></div>
<div class="t b" style="left:1542.9px;top:266.4px;color:#d2d2d2;">Tilemap Renderer</div>
<div class="t" style="left:1491.5px;top:297.8px;color:#c4c4c4;">Sort Order</div>
<div class="a" style="left:1647px;top:296px;width:251.5px;height:21.5px;background:#515151;border-radius:3px;box-shadow:0 1px 0 #242424"></div>
<div class="t" style="left:1651px;top:296.0px;color:#c4c4c4;">Bottom Left</div>
<div class="t" style="left:1491.5px;top:322.8px;color:#c4c4c4;">Mode</div>
<div class="a" style="left:1647px;top:321px;width:251.5px;height:21.5px;background:#515151;border-radius:3px;box-shadow:0 1px 0 #242424"></div>
<div class="t" style="left:1651px;top:321.0px;color:#c4c4c4;">Chunk</div>
<div class="t" style="left:1491.5px;top:347.8px;color:#c4c4c4;">Detect Chunk Culling</div>
<div class="a" style="left:1647px;top:346px;width:251.5px;height:21.5px;background:#515151;border-radius:3px;box-shadow:0 1px 0 #242424"></div>
<div class="t" style="left:1651px;top:346.0px;color:#c4c4c4;">Auto</div>
<div class="t" style="left:1491.5px;top:372.8px;color:#7c7c7c;">Chunk Culling Bound:</div>
<div class="t" style="left:1648px;top:372.8px;color:#7c7c7c;">X</div>
<div class="a" style="left:1665.5px;top:371px;width:61.0px;height:21.5px;background:#2a2a2a;border:1px solid #212121;border-radius:3px"></div>
<div class="t" style="left:1669.5px;top:373.8px;color:#7c7c7c;">0</div>
<div class="t" style="left:1733px;top:372.8px;color:#7c7c7c;">Y</div>
<div class="a" style="left:1751.5px;top:371px;width:61.0px;height:21.5px;background:#2a2a2a;border:1px solid #212121;border-radius:3px"></div>
<div class="t" style="left:1755.5px;top:373.8px;color:#7c7c7c;">0</div>
<div class="t" style="left:1819px;top:372.8px;color:#7c7c7c;">Z</div>
<div class="a" style="left:1837px;top:371px;width:61.5px;height:21.5px;background:#2a2a2a;border:1px solid #212121;border-radius:3px"></div>
<div class="t" style="left:1841px;top:373.8px;color:#7c7c7c;">0</div>
<div class="a" style="left:1644px;top:371px;width:4px;height:22px;background:#383838"></div>
<div class="t" style="left:1491.5px;top:397.8px;color:#c4c4c4;">Mask Interaction</div>
<div class="a" style="left:1647px;top:396px;width:251.5px;height:21.5px;background:#515151;border-radius:3px;box-shadow:0 1px 0 #242424"></div>
<div class="t" style="left:1651px;top:396.0px;color:#c4c4c4;">None</div>
<div class="t" style="left:1491.5px;top:422.8px;color:#c4c4c4;">Material</div>
<div class="a" style="left:1647px;top:421px;width:251.5px;height:21.5px;background:#2a2a2a;border:1px solid #212121;border-radius:3px"></div>
<div class="a" style="left:1875px;top:422px;width:22.5px;height:19.5px;background:#353535;border-radius:0 3px 3px 0"></div>
<div class="t" style="left:1665px;top:423.3px;color:#c4c4c4;">Sprites-Default</div>
<div class="t b" style="left:1492.4px;top:446.6px;color:#d2d2d2;">Additional Settings</div>
<div class="t" style="left:1509.2px;top:472.8px;color:#c4c4c4;">Sorting Layer</div>
<div class="a" style="left:1647px;top:471px;width:251.5px;height:21.5px;background:#515151;border-radius:3px;box-shadow:0 1px 0 #242424"></div>
<div class="t" style="left:1651px;top:471.0px;color:#c4c4c4;">Default</div>
<div class="t" style="left:1509.2px;top:497.8px;color:#c4c4c4;">Order in Layer</div>
<div class="a" style="left:1647px;top:496px;width:251.5px;height:21.5px;background:#2a2a2a;border:1px solid #212121;border-radius:3px"></div>
<div class="t" style="left:1651px;top:498.8px;color:#c4c4c4;">0</div>
<div class="a" style="left:1467px;top:529px;width:437px;height:1px;background:#1f1f1f"></div>
<div class="a" style="left:1467px;top:530px;width:437px;height:26.700000000000045px;background:#3e3e3e"></div>
<div class="a" style="left:1517px;top:534.85px;width:17.5px;height:17.5px;background:#2a2a2a;border:1px solid #202020;border-radius:3px"></div>
<div class="t b" style="left:1542.9px;top:533.9px;color:#d2d2d2;">Tilemap Collider 2D</div>
<div class="t" style="left:1491.5px;top:564.3px;color:#c4c4c4;">Max Tile Change Cou</div>
<div class="a" style="left:1647px;top:562.5px;width:251.5px;height:21.5px;background:#2a2a2a;border:1px solid #212121;border-radius:3px"></div>
<div class="t" style="left:1651px;top:565.3px;color:#c4c4c4;">1000</div>
<div class="t" style="left:1491.5px;top:589.3px;color:#c4c4c4;">Extrusion Factor</div>
<div class="a" style="left:1647px;top:587.5px;width:251.5px;height:21.5px;background:#2a2a2a;border:1px solid #212121;border-radius:3px"></div>
<div class="t" style="left:1651px;top:590.3px;color:#c4c4c4;">1e-05</div>
<div class="t" style="left:1491.5px;top:614.3px;color:#c4c4c4;">Used By Composite</div>
<div class="a" style="left:1646.3px;top:615.5px;width:17px;height:17px;background:#2a2a2a;border:1px solid #202020;border-radius:3px"></div>
<div class="t" style="left:1491.5px;top:639.3px;color:#c4c4c4;">Offset</div>
<div class="t" style="left:1648.5px;top:639.3px;color:#c4c4c4;">X</div>
<div class="a" style="left:1665.5px;top:637.5px;width:61.0px;height:21.5px;background:#2a2a2a;border:1px solid #212121;border-radius:3px"></div>
<div class="t" style="left:1669.5px;top:640.3px;color:#c4c4c4;">0</div>
<div class="t" style="left:1733.5px;top:639.3px;color:#c4c4c4;">Y</div>
<div class="a" style="left:1751.5px;top:637.5px;width:61.0px;height:21.5px;background:#2a2a2a;border:1px solid #212121;border-radius:3px"></div>
<div class="t" style="left:1755.5px;top:640.3px;color:#c4c4c4;">0</div>
<div class="t" style="left:1491.5px;top:663.2px;color:#c4c4c4;">Info</div>
<div class="a" style="left:1467px;top:694px;width:437px;height:1px;background:#1f1f1f"></div>
<div class="a" style="left:1467px;top:695px;width:437px;height:27px;background:#3e3e3e"></div>
<div class="t b" style="left:1542.9px;top:699.1px;color:#d2d2d2;">Rigidbody 2D</div>
<div class="t" style="left:1491.5px;top:729.8px;color:#c4c4c4;">Body Type</div>
<div class="a" style="left:1647px;top:728px;width:251.5px;height:21.5px;background:#515151;border-radius:3px;box-shadow:0 1px 0 #242424"></div>
<div class="t" style="left:1651px;top:728.0px;color:#c4c4c4;">Static</div>
<div class="t" style="left:1491.5px;top:754.3px;color:#c4c4c4;">Material</div>
<div class="a" style="left:1647px;top:752.5px;width:251.5px;height:21.5px;background:#2a2a2a;border:1px solid #212121;border-radius:3px"></div>
<div class="t" style="left:1650px;top:754.8px;color:#c4c4c4;">None (Physics Material 2D)</div>
<div class="a" style="left:1875px;top:753.5px;width:22.5px;height:19.5px;background:#353535;border-radius:0 3px 3px 0"></div>
<div class="t" style="left:1491.5px;top:779.3px;color:#c4c4c4;">Simulated</div>
<div class="a" style="left:1645px;top:780px;width:17px;height:17px;background:#2a2a2a;border:1px solid #202020;border-radius:3px"></div>
<div class="t" style="left:1491.5px;top:803.4px;color:#c4c4c4;">Info</div>
<div class="a" style="left:1467px;top:834px;width:437px;height:1px;background:#1f1f1f"></div>
<div class="a" style="left:1467px;top:835px;width:437px;height:27.299999999999955px;background:#3e3e3e"></div>
<div class="t b" style="left:1542.9px;top:839.2px;color:#d2d2d2;">Composite Collider 2D</div>
<div class="a" style="left:1467px;top:863px;width:437px;height:1px;background:#232323"></div>
<div class="a" style="left:1487px;top:871px;width:40px;height:40px;background:#333333;border-radius:2px"></div>
<div class="a" style="left:1491.7px;top:875.5px;width:30.7px;height:30.5px;background:#ffffff"></div>
<div class="t" style="left:1536px;top:870.0px;color:#c4c4c4;">Sprites-Default (Material)</div>
<div class="t" style="left:1533px;top:900.0px;color:#8a8a8a;">Shader</div>
<div class="a" style="left:1598px;top:899px;width:238.6px;height:21.2px;background:#464646;border-radius:3px"></div>
<div class="t" style="left:1602px;top:899.8px;color:#8f8f8f;">Sprites/Default</div>
<div class="a" style="left:1843px;top:899px;width:55px;height:21.2px;background:#464646;border-radius:3px"></div>
<div class="t" style="left:1849.5px;top:899.8px;color:#8f8f8f;">Edit...</div>
<div class="a" style="left:1467px;top:930.5px;width:437px;height:1px;background:#232323"></div>
<div class="a" style="left:1467px;top:945px;width:437px;height:1px;background:#232323"></div>
<div class="a" style="left:1543px;top:957px;width:285px;height:27.5px;background:#585858;border-radius:3px;box-shadow:0 1px 0 #232323"></div>
<div class="t" style="left:1543px;top:961.8px;width:285px;text-align:center;color:#dcdcdc">Add Component</div>
<div class="t" style="left:1497.4px;top:42.5px;color:#c4c4c4;">Inspector</div>
<div class="a" style="left:1906px;top:265.5px;width:13px;height:713px;background:#5e5e5e;border-radius:6.5px"></div>
<svg style="left:0;top:0" width="1920" height="1026"><path d="M1882.5 96.5L1888.5 90.5" stroke="#c4c4c4" stroke-width="3.2" stroke-linecap="round"/><path d="M1883.5 95.5L1887.8 91.2" stroke="#2a2a2a" stroke-width="1"/><path d="M1887 87.5L1893 93.5" stroke="#c4c4c4" stroke-width="2"/><path d="M1889.5 90.5L1892.5 85.5" stroke="#c4c4c4" stroke-width="3.5" stroke-linecap="round"/><path d="M1880.5 138.0H1890.5L1885.5 143.5Z" fill="#c4c4c4"/><path d="M1476.5 235.5V246.0L1485.0 240.75Z" fill="#8f8f8f"/><path d="M1474.5 271.75H1485.0L1479.75 279.75Z" fill="#8f8f8f"/><rect x="1494.2" y="267.6" width="3.4" height="3.4" fill="#b48ef0" transform="rotate(15 1495.9 269.2)"/><rect x="1500" y="268.9" width="3.3" height="3.3" fill="#b48ef0"/><rect x="1505" y="268.9" width="3.3" height="3.3" fill="#b48ef0"/><rect x="1495" y="273.9" width="3.3" height="3.3" fill="#b48ef0"/><rect x="1500" y="273.9" width="3.3" height="3.3" fill="#b48ef0"/><rect x="1505" y="273.9" width="3.3" height="3.3" fill="#b48ef0"/><rect x="1495" y="278.9" width="3.3" height="3.3" fill="#b48ef0"/><ellipse cx="1504.7" cy="280.9" rx="6.2" ry="4" fill="#383838"/><ellipse cx="1504.7" cy="280.9" rx="5.8" ry="3.6" fill="#c4c4c4"/><circle cx="1504.7" cy="280.9" r="2.2" fill="#3e3e3e"/><path d="M1521.2 276.2L1524.3 279.4L1530.3 272.8" fill="none" stroke="#e8e8e8" stroke-width="1.8"/><circle cx="1837.5" cy="275.8" r="6.2" fill="#c4c4c4"/><path d="M1835.3 273.9A2.3 2.3 0 1 1 1838.3 276.1Q1837.5 276.6 1837.5 277.6" fill="none" stroke="#3e3e3e" stroke-width="1.5"/><circle cx="1837.5" cy="279.4" r="1" fill="#3e3e3e"/><path d="M1856.5 272.2H1863.0M1866.0 272.2H1868.5M1856.5 279.2H1858.0M1861.0 279.2H1868.5" stroke="#c4c4c4" stroke-width="1.3"/><rect x="1863.3" y="269.8" width="2.6" height="6" rx="1" fill="#c4c4c4"/><rect x="1858.2" y="276.2" width="2.6" height="6" rx="0.5" fill="#c4c4c4"/><g fill="#c4c4c4"><circle cx="1887.5" cy="270.8" r="1.5"/><circle cx="1887.5" cy="275.8" r="1.5"/><circle cx="1887.5" cy="280.8" r="1.5"/></g><path d="M1880.5 304.5H1890.5L1885.5 310.0Z" fill="#c4c4c4"/><path d="M1880.5 329.5H1890.5L1885.5 335.0Z" fill="#c4c4c4"/><path d="M1880.5 354.5H1890.5L1885.5 360.0Z" fill="#c4c4c4"/><path d="M1880.5 404.5H1890.5L1885.5 410.0Z" fill="#c4c4c4"/><circle cx="1657" cy="432.0" r="5.5" fill="#3b9ae0"/><path d="M1654 430.0A3.5 3.5 0 0 1 1659.5 428.5" stroke="#e0f0ff" stroke-width="1.2" fill="none"/><circle cx="1657" cy="432.0" r="5.5" fill="none" stroke="#1f5a90" stroke-width="0.8"/><circle cx="1886.5" cy="431.8" r="5.5" fill="none" stroke="#c4c4c4" stroke-width="1.3"/><circle cx="1886.5" cy="431.8" r="2" fill="#c4c4c4"/><path d="M1474.5 452H1485.0L1479.75 460Z" fill="#8f8f8f"/><path d="M1880.5 479.5H1890.5L1885.5 485.0Z" fill="#c4c4c4"/><path d="M1474.5 539.35H1485.0L1479.75 547.35Z" fill="#8f8f8f"/><rect x="1494.2" y="535.1" width="3.4" height="3.4" fill="#8fe03a" transform="rotate(15 1495.9 536.9)"/><rect x="1495.0" y="541.1" width="3.3" height="3.3" fill="#8fe03a"/><rect x="1495.0" y="546.1" width="3.3" height="3.3" fill="#8fe03a"/><rect x="1500.0" y="536.1" width="3.3" height="3.3" fill="#8fe03a"/><rect x="1500.0" y="541.1" width="3.3" height="3.3" fill="#8fe03a"/><rect x="1500.0" y="546.1" width="3.3" height="3.3" fill="#8fe03a"/><rect x="1505.0" y="536.1" width="3.3" height="3.3" fill="#8fe03a"/><rect x="1505.0" y="541.1" width="3.3" height="3.3" fill="#8fe03a"/><rect x="1505.0" y="546.1" width="3.3" height="3.3" fill="#8fe03a"/><path d="M1521.2 543.9L1524.3 547.1L1530.3 540.4" fill="none" stroke="#e8e8e8" stroke-width="1.8"/><circle cx="1837.5" cy="543.4" r="6.2" fill="#c4c4c4"/><path d="M1835.3 541.6A2.3 2.3 0 1 1 1838.3 543.6Q1837.5 544.1 1837.5 545.1" fill="none" stroke="#3e3e3e" stroke-width="1.5"/><circle cx="1837.5" cy="547.0" r="1" fill="#3e3e3e"/><path d="M1856.5 539.9H1863.0M1866.0 539.9H1868.5M1856.5 546.9H1858.0M1861.0 546.9H1868.5" stroke="#c4c4c4" stroke-width="1.3"/><rect x="1863.3" y="537.4" width="2.6" height="6" rx="1" fill="#c4c4c4"/><rect x="1858.2" y="543.9" width="2.6" height="6" rx="0.5" fill="#c4c4c4"/><g fill="#c4c4c4"><circle cx="1887.5" cy="538.4" r="1.5"/><circle cx="1887.5" cy="543.4" r="1.5"/><circle cx="1887.5" cy="548.4" r="1.5"/></g><path d="M1650.5 624.5L1653.6 627.7L1659.6 621.0" fill="none" stroke="#e8e8e8" stroke-width="1.8"/><path d="M1476.5 668V678.5L1485.0 673.25Z" fill="#8f8f8f"/><path d="M1474.5 704.5H1485.0L1479.75 712.5Z" fill="#8f8f8f"/><circle cx="1502" cy="708.5" r="7" fill="none" stroke="#8fe03a" stroke-width="1.6"/><circle cx="1837.5" cy="708.5" r="6.2" fill="#c4c4c4"/><path d="M1835.3 706.7A2.3 2.3 0 1 1 1838.3 708.8Q1837.5 709.3 1837.5 710.3" fill="none" stroke="#3e3e3e" stroke-width="1.5"/><circle cx="1837.5" cy="712.1" r="1" fill="#3e3e3e"/><path d="M1856.5 705.0H1863.0M1866.0 705.0H1868.5M1856.5 712.0H1858.0M1861.0 712.0H1868.5" stroke="#c4c4c4" stroke-width="1.3"/><rect x="1863.3" y="702.5" width="2.6" height="6" rx="1" fill="#c4c4c4"/><rect x="1858.2" y="709.0" width="2.6" height="6" rx="0.5" fill="#c4c4c4"/><g fill="#c4c4c4"><circle cx="1887.5" cy="703.5" r="1.5"/><circle cx="1887.5" cy="708.5" r="1.5"/><circle cx="1887.5" cy="713.5" r="1.5"/></g><path d="M1880.5 736.5H1890.5L1885.5 742.0Z" fill="#c4c4c4"/><circle cx="1886.5" cy="763.3" r="5.5" fill="none" stroke="#c4c4c4" stroke-width="1.3"/><circle cx="1886.5" cy="763.3" r="2" fill="#c4c4c4"/><path d="M1649.2 789.0L1652.3 792.2L1658.3 785.5" fill="none" stroke="#e8e8e8" stroke-width="1.8"/><path d="M1476.5 808.5V819.0L1485.0 813.75Z" fill="#8f8f8f"/><path d="M1476.2 843.4V853.9L1484.7 848.65Z" fill="#8f8f8f"/><rect x="1494.5" y="841.1" width="8" height="8" fill="none" stroke="#8fe03a" stroke-width="1.8"/><path d="M1500 855.6H1511L1505.5 848.1Z" fill="#8fe03a"/><circle cx="1838" cy="848.6" r="6.2" fill="#c4c4c4"/><path d="M1835.8 846.9A2.3 2.3 0 1 1 1838.8 848.9Q1838 849.4 1838 850.4" fill="none" stroke="#3e3e3e" stroke-width="1.5"/><circle cx="1838" cy="852.2" r="1" fill="#3e3e3e"/><path d="M1856.8 845.1H1863.3M1866.3 845.1H1868.8M1856.8 852.1H1858.3M1861.3 852.1H1868.8" stroke="#c4c4c4" stroke-width="1.3"/><rect x="1863.6" y="842.6" width="2.6" height="6" rx="1" fill="#c4c4c4"/><rect x="1858.5" y="849.1" width="2.6" height="6" rx="0.5" fill="#c4c4c4"/><g fill="#c4c4c4"><circle cx="1887.8" cy="843.6" r="1.5"/><circle cx="1887.8" cy="848.6" r="1.5"/><circle cx="1887.8" cy="853.6" r="1.5"/></g><circle cx="1873.6" cy="879" r="6.2" fill="#c4c4c4"/><path d="M1871.4 877.2A2.3 2.3 0 1 1 1874.4 879.3Q1873.6 879.8 1873.6 880.8" fill="none" stroke="#383838" stroke-width="1.5"/><circle cx="1873.6" cy="882.6" r="1" fill="#383838"/><g fill="#c4c4c4"><circle cx="1894" cy="874" r="1.5"/><circle cx="1894" cy="879" r="1.5"/><circle cx="1894" cy="884" r="1.5"/></g><path d="M1476 911.5V922.0L1484.5 916.75Z" fill="#7a7a7a"/><path d="M1815 907.5H1825L1820 913Z" fill="#8a8a8a"/><circle cx="1485" cy="52.5" r="6" fill="#c4c4c4"/><rect x="1484" y="51" width="2" height="5.5" fill="#3c3c3c"/><circle cx="1485" cy="48.8" r="1.2" fill="#3c3c3c"/><g fill="none" stroke="#c4c4c4" stroke-width="1.4"><rect x="1876.3" y="51.3" width="9.6" height="5.6"/><path d="M1884.5 51.3V47.5Q1884.5 45.8 1882.7 45.8H1878.3"/></g><g fill="#c4c4c4"><circle cx="1901.8" cy="46.8" r="1.5"/><circle cx="1901.8" cy="51.6" r="1.5"/><circle cx="1901.8" cy="56.4" r="1.5"/></g><path d="M1907.5 77.5H1917.5L1912.5 71.5Z" fill="#c4c4c4"/><path d="M1907.5 986H1917.5L1912.5 992Z" fill="#c4c4c4"/></svg>

<div class="a" style="left:0;top:610px;width:1465px;height:391px;background:#383838;overflow:hidden">
<div class="a" style="left:0;top:0;width:1465px;height:24px;background:#282828"></div>
<div class="a" style="left:0;top:0;width:102px;height:24px;background:#3c3c3c;border-radius:5px 5px 0 0"></div>
<div class="a" style="left:0;top:24px;width:1465px;height:25px;background:#3c3c3c"></div>
<div class="a" style="left:0;top:49px;width:1465px;height:1px;background:#232323"></div>
<div class="a" style="left:259px;top:50px;width:1px;height:341px;background:#232323"></div>
<div class="a" style="left:260px;top:50px;width:1205px;height:341px;background:#333333"></div>
<div class="a" style="left:260px;top:50px;width:1205px;height:25px;background:#3b3b3b"></div>
<div class="a" style="left:260px;top:75px;width:1205px;height:1px;background:#2a2a2a"></div>
<div class="a" style="left:260px;top:366px;width:1205px;height:25px;background:#404040"></div>
<div class="a" style="left:0;top:149px;width:259px;height:20px;background:#4d4d4d"></div>
<div class="a" style="left:916px;top:27px;width:397px;height:19.5px;background:#2a2a2a;border:1px solid #1f1f1f;border-radius:5px"></div>
<div class="a" style="left:1292px;top:28px;width:20px;height:17.5px;background:#383838;border-radius:0 4px 4px 0"></div>
<div class="a" style="left:1317px;top:24px;width:1px;height:25px;background:#2e2e2e"></div>
<div class="a" style="left:1349.8px;top:24px;width:1px;height:25px;background:#2e2e2e"></div>
<div class="a" style="left:1381.6px;top:24px;width:1px;height:25px;background:#2e2e2e"></div>
<div class="a" style="left:1414.5px;top:24px;width:1px;height:25px;background:#2e2e2e"></div>
</div>
<div class="t" style="left:28.4px;top:613.2px;color:#c4c4c4;">Project</div>
<div class="t" style="left:132.3px;top:613.2px;color:#c4c4c4;">Console</div>
<div class="t b" style="left:44.3px;top:660.1px;color:#d2d2d2;">Favorites</div>
<div class="t" style="left:60.3px;top:679.8px;color:#c4c4c4;">All Materials</div>
<div class="t" style="left:60.3px;top:699.8px;color:#c4c4c4;">All Models</div>
<div class="t" style="left:60.3px;top:719.8px;color:#c4c4c4;">All Prefabs</div>
<div class="t b" style="left:44.3px;top:759.2px;color:#d8d8d8;">Assets</div>
<div class="t" style="left:60.3px;top:779.2px;color:#c4c4c4;">Scenes</div>
<div class="t" style="left:60.3px;top:799.2px;color:#c4c4c4;">Tilepalette</div>
<div class="t b" style="left:44.3px;top:819.2px;color:#d2d2d2;">Packages</div>
<div class="t b" style="left:265.3px;top:662.8px;color:#d2d2d2;">Assets</div>
<div class="t" style="left:1437px;top:638.1px;color:#c4c4c4;">15</div>
<div class="t" style="left:259.5px;top:779.2px;width:120px;text-align:center;font-size:13px;letter-spacing:0.45px;color:#c4c4c4">Scenes</div>
<div class="t" style="left:352.2px;top:779.2px;width:120px;text-align:center;font-size:13px;letter-spacing:0.45px;color:#c4c4c4">Tilepalette</div>
<div class="t" style="left:447.1px;top:779.2px;width:120px;text-align:center;font-size:13px;letter-spacing:0.45px;color:#c4c4c4">hitsuji_dot</div>
<div class="t" style="left:542.5px;top:779.2px;width:120px;text-align:center;font-size:13px;letter-spacing:0.45px;color:#c4c4c4">tiles</div>
<div class="t" style="left:637.5px;top:779.2px;width:120px;text-align:center;font-size:13px;letter-spacing:0.45px;color:#c4c4c4">tiles_0</div>
<div class="t" style="left:732.5px;top:779.2px;width:120px;text-align:center;font-size:13px;letter-spacing:0.45px;color:#c4c4c4">tiles_1</div>
<div class="t" style="left:827.5px;top:779.2px;width:120px;text-align:center;font-size:13px;letter-spacing:0.45px;color:#c4c4c4">tiles_2</div>
<div class="t" style="left:922.5px;top:779.2px;width:120px;text-align:center;font-size:13px;letter-spacing:0.45px;color:#c4c4c4">tiles_3</div>
<div class="t" style="left:1017.5px;top:779.2px;width:120px;text-align:center;font-size:13px;letter-spacing:0.45px;color:#c4c4c4">tiles_4</div>
<div class="t" style="left:1112.5px;top:779.2px;width:120px;text-align:center;font-size:13px;letter-spacing:0.45px;color:#c4c4c4">tiles_5</div>
<div class="t" style="left:1207.5px;top:779.2px;width:120px;text-align:center;font-size:13px;letter-spacing:0.45px;color:#c4c4c4">tiles_6</div>
<div class="t" style="left:1302.5px;top:779.2px;width:120px;text-align:center;font-size:13px;letter-spacing:0.45px;color:#c4c4c4">tiles_7</div>
<div class="a" style="left:488.6px;top:719.2px;width:39.6px;height:41px;background:#2b2b2b"></div>
<div class="a" style="left:564.8px;top:700.7px;width:75.5px;height:76.8px;background:#333333;border:1.5px solid #2a2a2a;box-shadow:0 1px 2px #262626"></div>
<div class="a" style="left:645px;top:704.3px;width:767px;height:70.3px;background:#515151;border-radius:10px;box-shadow:0 1px 2px #252525"></div>
<div class="a" style="left:1787.5px;top:1003px;width:1.5px;height:23px;background:#262626"></div>
<div class="a" style="left:1821px;top:1003px;width:1.5px;height:23px;background:#262626"></div>
<div class="a" style="left:1854.3px;top:1003px;width:1.5px;height:23px;background:#262626"></div>
<div class="a" style="left:1887px;top:1003px;width:1.5px;height:23px;background:#262626"></div>
<svg style="left:0;top:0" width="1920" height="1026"><path d="M9 617.5H14.5L16 619.5H23.3V629H9Z" fill="#c4c4c4"/><rect x="113.5" y="617" width="12" height="12" fill="none" stroke="#c4c4c4" stroke-width="1.3"/><path d="M116 620H123M116 622.5H123M116 625H123" stroke="#c4c4c4" stroke-width="1.2"/><path d="M8 647H24M16 639.3V654.7" stroke="#c4c4c4" stroke-width="2.2"/><path d="M28.6 643.6H38L33.3 649.4Z" fill="#c4c4c4"/><g fill="none" stroke="#c4c4c4" stroke-width="1.4"><rect x="1421.5" y="621.5" width="10" height="5.5"/><path d="M1429.5 621.5V617.5Q1429.5 615.8 1427.7 615.8H1423.2"/></g><g fill="#c4c4c4"><circle cx="1447.8" cy="617" r="1.5"/><circle cx="1447.8" cy="621.8" r="1.5"/><circle cx="1447.8" cy="626.6" r="1.5"/></g><circle cx="925.5" cy="645.3" r="2.6" fill="none" stroke="#b0b0b0" stroke-width="1.3"/><path d="M927.3 647.2L930 650" stroke="#b0b0b0" stroke-width="1.6"/><g fill="none" stroke="#aaaaaa" stroke-width="1"><rect x="1297" y="639.5" width="11.5" height="11.5"/><rect x="1294.5" y="647" width="5" height="5"/><path d="M1298.5 648.5L1306 641.5M1302 641H1306.5V645.5"/></g><rect x="1325.5" y="638.5" width="6" height="5.5" fill="#c4c4c4"/><circle cx="1328.5" cy="649.5" r="3.3" fill="#c4c4c4"/><path d="M1333 641L1337.5 647.5H1328.5Z" fill="#c4c4c4"/><path d="M1357 646.5L1363.5 640H1369.5V646L1363 652.5Z" fill="#c4c4c4"/><circle cx="1366.5" cy="643" r="1.1" fill="#3c3c3c"/><path d="M1396.5 639.5L1398.3 643.8L1402.8 644.1L1399.3 647L1400.4 651.4L1396.5 649L1392.6 651.4L1393.7 647L1390.2 644.1L1394.7 643.8Z" fill="#c4c4c4"/><path d="M1420.5 646Q1427.5 638.5 1434.5 646Q1427.5 653.5 1420.5 646Z" fill="none" stroke="#c4c4c4" stroke-width="1.4"/><path d="M1421.5 652L1434 639.5" stroke="#c4c4c4" stroke-width="1.4"/><path d="M5 666.4H15.2L10.1 674.8Z" fill="#8f8f8f"/><path d="M30 663.4L31.8 667.6L36.4 668L32.9 671L34 675.5L30 673.1L26 675.5L27.1 671L23.6 668L28.2 667.6Z" fill="#c4c4c4"/><circle cx="45.5" cy="688.5" r="4.6" fill="none" stroke="#c4c4c4" stroke-width="1.3"/><path d="M48.8 691.8L52.5 695.5" stroke="#c4c4c4" stroke-width="1.8"/><circle cx="45.5" cy="708.5" r="4.6" fill="none" stroke="#c4c4c4" stroke-width="1.3"/><path d="M48.8 711.8L52.5 715.5" stroke="#c4c4c4" stroke-width="1.8"/><circle cx="45.5" cy="728.5" r="4.6" fill="none" stroke="#c4c4c4" stroke-width="1.3"/><path d="M48.8 731.8L52.5 735.5" stroke="#c4c4c4" stroke-width="1.8"/><path d="M5 765H15.2L10.1 773.4Z" fill="#8f8f8f"/><path d="M23 776.5V765H28.5L30 767H37V769.5H27L23 776.5Z M27.5 770.5H39.5L36 777H23.5Z" fill="#c4c4c4"/><path d="M40 784.0H45.5L47 786.0H54V795.5H40Z" fill="#c4c4c4"/><path d="M40 804.0H45.5L47 806.0H54V815.5H40Z" fill="#c4c4c4"/><path d="M5.6 823.5V834L14.2 828.8Z" fill="#8f8f8f"/><path d="M23 823.5H28.5L30 825.5H37.3V835H23Z" fill="#c4c4c4"/><path d="M292.75 713.75H313.75L321.00 724H344.95A4 4 0 0 1 348.95 728V760A4 4 0 0 1 344.95 764H292.75A4 4 0 0 1 288.75 760V717.75A4 4 0 0 1 292.75 713.75Z" fill="#c2c2c2"/><path d="M387.75 713.75H408.75L416.00 724H439.95A4 4 0 0 1 443.95 728V760A4 4 0 0 1 439.95 764H387.75A4 4 0 0 1 383.75 760V717.75A4 4 0 0 1 387.75 713.75Z" fill="#c2c2c2"/><g><path d="M496 748V756H500V750ZM502 752V759H507V752ZM521 748V753H526V748Z" fill="#ecd8b8"/><circle cx="511" cy="738.5" r="16.5" fill="#fafafa"/><circle cx="503" cy="728" r="7" fill="#fafafa"/><circle cx="520" cy="728" r="7" fill="#fafafa"/><circle cx="524" cy="742" r="5.5" fill="#fafafa"/><circle cx="500" cy="748" r="6" fill="#fafafa"/><circle cx="513" cy="752" r="6" fill="#fafafa"/><path d="M490.5 726Q496 727 503.5 729Q505 737 503 743.5Q496 744.5 491 741Z" fill="#ecd4b0"/><path d="M490.5 726L493 724.5L494 728Z" fill="#e0c8a0"/><circle cx="500.2" cy="735.5" r="1.4" fill="#111"/><rect x="491.5" y="739.5" width="2.2" height="1.6" fill="#333"/><path d="M506 727Q514 724 514.5 733Q515 740 508 741" fill="none" stroke="#e0bf7a" stroke-width="3.5"/></g><circle cx="549" cy="737.7" r="10" fill="#c8c8c8"/><path d="M545.5 732.5V743L553.5 737.7Z" fill="#3a3a3a"/><rect x="566" y="702" width="8" height="15" fill="#c69060"/><rect x="566" y="702" width="8" height="3" fill="#3ccc3c"/><path d="M588.5 702L596 709.5V716L588.5 724.5L581 716V709.5Z" fill="#c69060"/><path d="M588.5 702L596 709.5V712L588.5 705L581 712V709.5Z" fill="#3ccc3c"/><circle cx="643.6" cy="737.7" r="10" fill="#c8c8c8"/><path d="M647 732.5V743L639 737.7Z" fill="#3a3a3a"/><rect x="680" y="720" width="39" height="39" fill="#c08a58"/><path d="M686 736l2.5 1.5" stroke="#7a4a22" stroke-width="1.2" opacity="0.7"/><path d="M706 734l2.5 1.5" stroke="#7a4a22" stroke-width="1.2" opacity="0.7"/><path d="M696 750l2.5 1.5" stroke="#7a4a22" stroke-width="1.2" opacity="0.7"/><path d="M688 760l2.5 1.5" stroke="#7a4a22" stroke-width="1.2" opacity="0.7"/><path d="M710 758l2.5 1.5" stroke="#7a4a22" stroke-width="1.2" opacity="0.7"/><path d="M702 744l2.5 1.5" stroke="#7a4a22" stroke-width="1.2" opacity="0.7"/><path d="M680 720H719V734L715.1 730L711.2 735L707.3 730L703.4 735L699.5 730L695.6 735L691.7 730L687.8 735L683.9 730L680.0 735Z" fill="#33c233"/><rect x="680" y="720" width="39" height="4" fill="#47ea47"/><path d="M775.1 759H814.1V720Z" fill="#c08a58"/><path d="M775.1 759L814.1 720V737L792.1 759Z" fill="#33c233"/><path d="M775.1 759L814.1 720V725L780.1 759Z" fill="#47ea47"/><path d="M870.2 720L909.2 759H870.2Z" fill="#c08a58"/><path d="M870.2 720L909.2 759H892.2L870.2 737Z" fill="#33c233"/><path d="M870.2 720L909.2 759H904.2L870.2 725Z" fill="#47ea47"/><rect x="964.8" y="720" width="39" height="39" fill="#c08a58"/><path d="M970.8 728l2.5 1.5" stroke="#7a4a22" stroke-width="1.2" opacity="0.7"/><path d="M990.8 726l2.5 1.5" stroke="#7a4a22" stroke-width="1.2" opacity="0.7"/><path d="M980.8 742l2.5 1.5" stroke="#7a4a22" stroke-width="1.2" opacity="0.7"/><path d="M972.8 752l2.5 1.5" stroke="#7a4a22" stroke-width="1.2" opacity="0.7"/><path d="M994.8 750l2.5 1.5" stroke="#7a4a22" stroke-width="1.2" opacity="0.7"/><path d="M986.8 736l2.5 1.5" stroke="#7a4a22" stroke-width="1.2" opacity="0.7"/><rect x="1060" y="720" width="39" height="39" fill="#c08a58"/><path d="M1066 728l2.5 1.5" stroke="#7a4a22" stroke-width="1.2" opacity="0.7"/><path d="M1086 726l2.5 1.5" stroke="#7a4a22" stroke-width="1.2" opacity="0.7"/><path d="M1076 742l2.5 1.5" stroke="#7a4a22" stroke-width="1.2" opacity="0.7"/><path d="M1068 752l2.5 1.5" stroke="#7a4a22" stroke-width="1.2" opacity="0.7"/><path d="M1090 750l2.5 1.5" stroke="#7a4a22" stroke-width="1.2" opacity="0.7"/><path d="M1082 736l2.5 1.5" stroke="#7a4a22" stroke-width="1.2" opacity="0.7"/><path d="M1060 720H1072L1060 732Z" fill="#3ccc3c"/><rect x="1154.7" y="720" width="39" height="39" fill="#c08a58"/><path d="M1160.7 728l2.5 1.5" stroke="#7a4a22" stroke-width="1.2" opacity="0.7"/><path d="M1180.7 726l2.5 1.5" stroke="#7a4a22" stroke-width="1.2" opacity="0.7"/><path d="M1170.7 742l2.5 1.5" stroke="#7a4a22" stroke-width="1.2" opacity="0.7"/><path d="M1162.7 752l2.5 1.5" stroke="#7a4a22" stroke-width="1.2" opacity="0.7"/><path d="M1184.7 750l2.5 1.5" stroke="#7a4a22" stroke-width="1.2" opacity="0.7"/><path d="M1176.7 736l2.5 1.5" stroke="#7a4a22" stroke-width="1.2" opacity="0.7"/><path d="M1193.7 720H1181.7L1193.7 732Z" fill="#3ccc3c"/><rect x="1250.5" y="720.5" width="38" height="38" fill="#4e4e4e" stroke="#484848" stroke-width="1"/><path d="M1250 720H1289V759Z" fill="#c08a58"/><rect x="1345.5" y="720.5" width="38" height="38" fill="#4e4e4e" stroke="#484848" stroke-width="1"/><path d="M1345 720H1384L1345 759Z" fill="#c08a58"/><path d="M1376 988.5H1444.5" stroke="#5c5c5c" stroke-width="2.5"/><circle cx="1415.6" cy="988" r="6" fill="#999999"/><g><ellipse cx="1804" cy="1017.5" rx="5.8" ry="6.8" fill="#c4c4c4"/><path d="M1800 1011L1798.5 1008M1808 1011L1809.5 1008M1798.5 1014.5L1796.5 1013.5M1809.5 1014.5L1811.5 1013.5M1798 1019H1795.5M1810 1019H1812.5M1799 1022.5L1797.5 1024.5M1809 1022.5L1810.5 1024.5" stroke="#c4c4c4" stroke-width="1.6"/><path d="M1796 1007.5L1813 1025" stroke="#1a1a1a" stroke-width="3.2"/><path d="M1796 1007.5L1813 1025" stroke="#c4c4c4" stroke-width="1.1"/><ellipse cx="1837.5" cy="1010.5" rx="7.3" ry="3.3" fill="#c4c4c4"/><path d="M1830.2 1013.5Q1837.5 1018.5 1844.8 1013.5V1016Q1837.5 1021 1830.2 1016Z M1830.2 1018.5Q1837.5 1023.5 1844.8 1018.5V1021Q1837.5 1026 1830.2 1021Z" fill="#c4c4c4"/><path d="M1829.5 1007.5L1846 1025" stroke="#1a1a1a" stroke-width="3.2"/><path d="M1829.5 1007.5L1846 1025" stroke="#c4c4c4" stroke-width="1.1"/><path d="M1864 1011A8 8 0 0 1 1876 1010M1876.5 1021A8 8 0 0 1 1864.5 1022" fill="none" stroke="#c4c4c4" stroke-width="1.8"/><path d="M1877.5 1007V1013H1872ZM1862.5 1025V1019H1868Z" fill="#c4c4c4"/><circle cx="1870" cy="1014.5" r="2.6" fill="#c4c4c4"/><path d="M1866.5 1021Q1870 1016 1873.5 1021Z" fill="#c4c4c4"/><path d="M1862 1007.5L1879 1025" stroke="#1a1a1a" stroke-width="3.2"/><path d="M1862 1007.5L1879 1025" stroke="#c4c4c4" stroke-width="1.1"/><circle cx="1902" cy="1016" r="8.5" fill="none" stroke="#c4c4c4" stroke-width="1.3"/><path d="M1898 1016L1901 1019L1906 1013" fill="none" stroke="#c4c4c4" stroke-width="1.7"/></g></svg>

<svg style="left:0;top:0" width="1920" height="1026"><polygon points="1499.6,693.8 1581.4,642.5 1563.7,634.9 1569.4,613.3 1630.8,629.8 1615.6,691.3 1594.1,687.5 1599.8,662.1 1510.4,712.2" fill="#c9c9c9" stroke="#c9c9c9" stroke-width="8.5" stroke-linejoin="round" transform="translate(-2,3.5)"/><polygon points="1499.6,693.8 1581.4,642.5 1563.7,634.9 1569.4,613.3 1630.8,629.8 1615.6,691.3 1594.1,687.5 1599.8,662.1 1510.4,712.2" fill="#f0f0f0" stroke="#f0f0f0" stroke-width="8.5" stroke-linejoin="round"/><polygon points="1499.6,693.8 1581.4,642.5 1563.7,634.9 1569.4,613.3 1630.8,629.8 1615.6,691.3 1594.1,687.5 1599.8,662.1 1510.4,712.2" fill="#ffe000"/><polygon points="1550.3,839.5 1611.1,779.3 1590.2,778.7 1590.2,761.5 1642.8,762.2 1641.5,814.8 1624.4,813.5 1624.4,793.2 1562.3,851.5" fill="#c9c9c9" stroke="#c9c9c9" stroke-width="8.5" stroke-linejoin="round" transform="translate(-2,3.5)"/><polygon points="1550.3,839.5 1611.1,779.3 1590.2,778.7 1590.2,761.5 1642.8,762.2 1641.5,814.8 1624.4,813.5 1624.4,793.2 1562.3,851.5" fill="#f0f0f0" stroke="#f0f0f0" stroke-width="8.5" stroke-linejoin="round"/><polygon points="1550.3,839.5 1611.1,779.3 1590.2,778.7 1590.2,761.5 1642.8,762.2 1641.5,814.8 1624.4,813.5 1624.4,793.2 1562.3,851.5" fill="#ffe000"/></svg>

</body></html>
